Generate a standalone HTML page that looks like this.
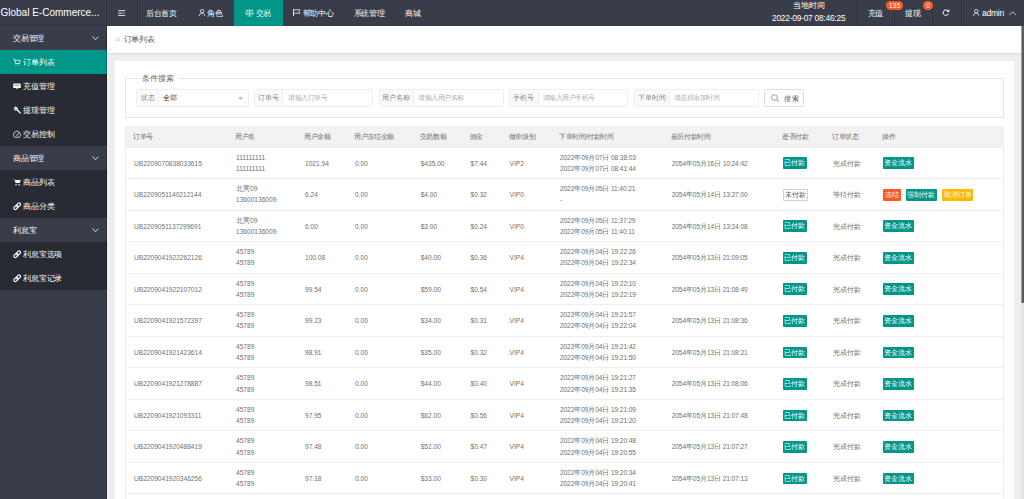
<!DOCTYPE html>
<html><head><meta charset="utf-8">
<style>
*{margin:0;padding:0;box-sizing:border-box}
html,body{width:1024px;height:499px;overflow:hidden;background:#eeeeee;font-family:"Liberation Sans",sans-serif;color:#666}
.abs{position:absolute}
#hdr{position:absolute;left:0;top:0;width:1024px;height:25.6px;background:#393D49;color:#fff}
#logo{position:absolute;left:0;top:0;width:106.7px;height:25.6px;line-height:25.6px;font-size:10px;color:#fff;white-space:nowrap;overflow:hidden;padding-left:0.5px}
.vd{position:absolute;top:0;width:1px;height:25.6px;background:#2f333d}
.nt{position:absolute;top:0.7px;height:25.6px;line-height:25.6px;font-size:7.5px;letter-spacing:-.25px;color:#fff;white-space:nowrap}
#act{position:absolute;left:234px;top:0;width:49px;height:25.6px;background:#009688}
.badge{position:absolute;top:1.2px;height:8.8px;line-height:9.6px;border-radius:4.4px;background:#FF5722;color:#fff;font-size:7px;text-align:center}
#side{position:absolute;left:0;top:25.6px;width:106.7px;height:474px;background:#393D49}
.sg,.ss,.sa{position:absolute;left:0;width:106.7px;height:24px;line-height:24px;font-size:7.5px;letter-spacing:-.25px;color:#fff;white-space:nowrap}
.sg{background:#393D49}
.ss{background:#282B33}
.sa{background:#009688}
.sg .st{position:absolute;left:13.2px;top:1.6px}
.chev{position:absolute;left:91.6px;top:10.6px}
.si{position:absolute;left:13.2px;top:8.9px}
.sst{position:absolute;left:23.3px;top:1.4px}
#bc{position:absolute;left:106.7px;top:25.6px;width:915.3px;height:27px;background:#fff;box-shadow:0 1px 2px rgba(0,0,0,.08)}
#bc .t{position:absolute;left:17px;top:0.3px;line-height:27px;font-size:7.5px;letter-spacing:-.25px;color:#555}
#scroll{position:absolute;left:1021px;top:25.6px;width:3px;height:474px;background:#e3e3e3}
#thumb{position:absolute;left:1021px;top:25.6px;width:3px;height:277px;background:linear-gradient(to right,#a0a0a0 0,#a0a0a0 33%,#5c5c5c 33%)}
#card{position:absolute;left:114.7px;top:61px;width:899.5px;height:450px;background:#fff}
#fs{position:absolute;left:125.3px;top:78.4px;width:878.5px;height:40px;border:1px solid #e6e6e6}
#legend{position:absolute;left:138px;top:73px;height:11px;line-height:11px;padding:0 4px;background:#fff;font-size:7.5px;color:#666}
.ig{position:absolute;top:89.4px;height:17.2px;border:1px solid #eee;border-radius:1.5px;background:#fff}
.ig .lb{position:absolute;left:0;top:0;height:15.2px;line-height:16.6px;background:#fafafa;border-right:1px solid #eee;font-size:6.9px;color:#888;text-align:center}
.ig .ph{position:absolute;top:0;line-height:16.6px;font-size:6.6px;letter-spacing:-.5px;color:#b0b0b0;white-space:nowrap}
#sbtn{position:absolute;left:764.3px;top:89.4px;width:39.5px;height:17.3px;border:1px solid #ddd;border-radius:1.5px;background:#fff}
#tbl{position:absolute;left:125.3px;top:126px;width:878.7px;height:400px;border-left:1px solid #eeeeee;border-right:1px solid #eeeeee}
.thead{position:absolute;left:0;top:0;width:100%;height:21.5px;background:#f2f2f2;border-bottom:1px solid #ececec}
.row{position:absolute;left:0;width:100%;height:31.52px;border-bottom:1px solid #efefef;background:#fff}
.c,.c2,.cb{position:absolute;top:0;height:100%;white-space:nowrap;font-size:6.6px;color:#707070}
.thead .c{line-height:22.8px;letter-spacing:-.4px;margin-left:-.8px}
.dt{letter-spacing:-.1px}
.row .c{line-height:31px}
.c2 .l1{position:absolute;left:0;top:5.3px;line-height:10.67px}
.c2 .l2{position:absolute;left:0;top:16.4px;line-height:10.67px}
.cb{top:9.9px;height:11.7px;margin-left:-0.4px}
.btn{display:inline-block;height:11.6px;line-height:11.6px;padding:0;text-align:center;font-size:6.6px;color:#fff;border-radius:1px;margin-right:5.1px;vertical-align:top}
.btn.g{background:#009688}
.btn.r{background:#FF5722}
.btn.y{background:#FFB800}
.btn.o{background:#fff;color:#555;border:1px solid #d2d2d2;line-height:9.6px}
</style></head><body>
<div id="hdr">
 <div id="logo">Global E-Commerce...</div>
 <div class="vd" style="left:106.2px"></div>
 <div class="vd" style="left:136.5px"></div>
 <svg class="abs" style="left:118px;top:9.8px" width="8" height="6.4" viewBox="0 0 16 13"><rect x="0" y="0.3" width="14.5" height="2" fill="#ddd"/><rect x="0" y="5.3" width="9" height="2" fill="#ddd"/><path d="M11 4.3l3 2-3 2z" fill="#ddd"/><rect x="0" y="10.3" width="14.5" height="2" fill="#ddd"/></svg>
 <div class="nt" style="left:145.9px">后台首页</div>
 <svg class="abs" style="left:198.8px;top:9.2px" width="6.2" height="7.2" viewBox="0 0 12.4 14.4"><circle cx="6.2" cy="4.3" r="3.4" fill="none" stroke="#fff" stroke-width="1.5"/><path d="M0.8 14.4c0-3.8 2.3-6.2 5.4-6.2s5.4 2.4 5.4 6.2" fill="none" stroke="#fff" stroke-width="1.5"/></svg>
 <div class="nt" style="left:207.3px">角色</div>
 <div id="act"></div>
 <svg class="abs" style="left:245px;top:9.2px" width="9" height="7.5" viewBox="0 0 18 15"><path d="M9 1.2v12.6M5 14h8M1.5 2.6h15" stroke="#fff" stroke-width="1.3" fill="none"/><path d="M4 2.6L1.2 8.2M4 2.6L6.8 8.2M14 2.6L11.2 8.2M14 2.6L16.8 8.2" stroke="#fff" stroke-width="0.8" fill="none"/><path d="M0.6 8.2h6.8a3.4 2.8 0 0 1-6.8 0zM10.6 8.2h6.8a3.4 2.8 0 0 1-6.8 0z" fill="none" stroke="#fff" stroke-width="1.1"/></svg>
 <div class="nt" style="left:255.7px">交易</div>
 <svg class="abs" style="left:293px;top:9.2px" width="8" height="7" viewBox="0 0 16 14"><path d="M1 0.5v13.5" stroke="#fff" stroke-width="1.7"/><path d="M1 1.5h13l-2.5 3.5 2.5 3.5H1" fill="none" stroke="#fff" stroke-width="1.4"/></svg>
 <div class="nt" style="left:302.7px">帮助中心</div>
 <div class="nt" style="left:353.5px">系统管理</div>
 <div class="nt" style="left:404.8px">商城</div>
 <div class="nt" style="left:793.3px;top:-6.8px;font-size:7.5px">当地时间</div>
 <div class="nt" style="left:771.6px;top:6px;font-size:9px;transform:scaleX(.93);transform-origin:0 0">2022-09-07 08:46:25</div>
 <div class="vd" style="left:856.4px"></div>
 <div class="vd" style="left:894.3px"></div>
 <div class="vd" style="left:931.7px"></div>
 <div class="vd" style="left:961.3px"></div>
 <div class="nt" style="left:867.6px">充值</div>
 <div class="badge" style="left:885.7px;width:17.6px">135</div>
 <div class="nt" style="left:905px">提现</div>
 <div class="badge" style="left:923.2px;width:10.2px">0</div>
 <svg class="abs" style="left:942.4px;top:8.8px" width="7.5" height="7" viewBox="0 0 15 14"><path d="M12.5 4.5A5.5 5.5 0 1 0 13 9" fill="none" stroke="#fff" stroke-width="2"/><path d="M14.5 0.5v5.5h-5.5z" fill="#fff"/></svg>
 <svg class="abs" style="left:972.7px;top:8.8px" width="6.5" height="7.4" viewBox="0 0 13 15"><circle cx="6.5" cy="4.5" r="3.6" fill="none" stroke="#fff" stroke-width="1.5"/><path d="M0.8 15c0-4 2.5-6.5 5.7-6.5s5.7 2.5 5.7 6.5" fill="none" stroke="#fff" stroke-width="1.5"/></svg>
 <div class="nt" style="left:982px;font-size:8.5px">admin</div>
 <svg class="abs" style="left:1008.8px;top:10.6px" width="7.4" height="4.4" viewBox="0 0 15 9"><path d="M1 8l6.5-6.5 6.5 6.5" fill="none" stroke="#fff" stroke-width="1.5"/></svg>
</div>
<div id="side">
<div class="sg" style="top:0.00px"><span class="st">交易管理</span><svg class="chev" viewBox="0 0 10 6" width="7" height="4.5"><path d="M0.5 0.5l4.5 4.5 4.5-4.5" fill="none" stroke="#fff" stroke-width="1.2"/></svg></div>
<div class="sa" style="top:24.00px"><svg class="si" viewBox="0 0 16 16" width="8" height="8"><path d="M0.5 2h2.5l2 9h8l1.5-6.5H4" fill="none" stroke="#fff" stroke-width="1.5"/><circle cx="6" cy="14" r="1.2" fill="#fff"/><circle cx="12" cy="14" r="1.2" fill="#fff"/></svg><span class="sst">订单列表</span></div>
<div class="ss" style="top:48.00px"><svg class="si" viewBox="0 0 16 16" width="8" height="8"><rect x="0.5" y="3" width="15" height="9" rx="1" fill="#fff"/><path d="M3 6.5h10" stroke="#282B33" stroke-width="1.2"/><path d="M6 12l2 2.5 2-2.5z" fill="#fff"/></svg><span class="sst">充值管理</span></div>
<div class="ss" style="top:72.00px"><svg class="si" viewBox="0 0 16 16" width="8" height="8"><path d="M5.5 0.5l5 5-3.5 3.5-5-5z" fill="#fff"/><path d="M1 5.5l4.5 4.5" stroke="#fff" stroke-width="1.6"/><path d="M8 7.5l7 7" stroke="#fff" stroke-width="2.6"/></svg><span class="sst">提现管理</span></div>
<div class="ss" style="top:96.00px"><svg class="si" viewBox="0 0 16 16" width="8" height="8"><path d="M3 14.5A7 7 0 1 1 13 14.5z" fill="none" stroke="#fff" stroke-width="1.5"/><path d="M7 11.5l5-6" stroke="#fff" stroke-width="1.6"/></svg><span class="sst">交易控制</span></div>
<div class="sg" style="top:120.00px"><span class="st">商品管理</span><svg class="chev" viewBox="0 0 10 6" width="7" height="4.5"><path d="M0.5 0.5l4.5 4.5 4.5-4.5" fill="none" stroke="#fff" stroke-width="1.2"/></svg></div>
<div class="ss" style="top:144.00px"><svg class="si" viewBox="0 0 16 16" width="8" height="8"><path d="M0 2h3l2 8h8.5l2-6H4z" fill="#fff"/><circle cx="6" cy="13.5" r="1.5" fill="#fff"/><circle cx="12" cy="13.5" r="1.5" fill="#fff"/></svg><span class="sst">商品列表</span></div>
<div class="ss" style="top:168.00px"><svg class="si" viewBox="0 0 16 16" width="8.4" height="8.4" style="margin-top:-.3px"><g transform="rotate(-45 8 8)"><rect x="0.2" y="5.3" width="9" height="5.4" rx="2.7" fill="none" stroke="#fff" stroke-width="2.1"/><rect x="6.8" y="5.3" width="9" height="5.4" rx="2.7" fill="none" stroke="#fff" stroke-width="2.1"/></g></svg><span class="sst">商品分类</span></div>
<div class="sg" style="top:192.00px"><span class="st">利息宝</span><svg class="chev" viewBox="0 0 10 6" width="7" height="4.5"><path d="M0.5 0.5l4.5 4.5 4.5-4.5" fill="none" stroke="#fff" stroke-width="1.2"/></svg></div>
<div class="ss" style="top:216.00px"><svg class="si" viewBox="0 0 16 16" width="8.4" height="8.4" style="margin-top:-.3px"><g transform="rotate(-45 8 8)"><rect x="0.2" y="5.3" width="9" height="5.4" rx="2.7" fill="none" stroke="#fff" stroke-width="2.1"/><rect x="6.8" y="5.3" width="9" height="5.4" rx="2.7" fill="none" stroke="#fff" stroke-width="2.1"/></g></svg><span class="sst">利息宝选项</span></div>
<div class="ss" style="top:240.00px"><svg class="si" viewBox="0 0 16 16" width="8.4" height="8.4" style="margin-top:-.3px"><g transform="rotate(-45 8 8)"><rect x="0.2" y="5.3" width="9" height="5.4" rx="2.7" fill="none" stroke="#fff" stroke-width="2.1"/><rect x="6.8" y="5.3" width="9" height="5.4" rx="2.7" fill="none" stroke="#fff" stroke-width="2.1"/></g></svg><span class="sst">利息宝记录</span></div>
</div>
<div class="abs" style="left:0;top:25px;width:107px;height:1px;background:#30343d"></div>
<div class="abs" style="left:106px;top:26px;width:1px;height:473px;background:rgba(0,0,0,.22)"></div>
<div id="bc">
 <svg class="abs" style="left:8.1px;top:11.6px" width="5.6" height="5.2" viewBox="0 0 11 10"><path d="M1 1l4 4-4 4M6 1l4 4-4 4" fill="none" stroke="#888" stroke-width="1"/></svg>
 <div class="t">订单列表</div>
</div>
<div id="card"></div>
<div id="fs"></div>
<div id="legend">条件搜索</div>
<div class="ig" style="left:136.3px;width:112.4px"><div class="lb" style="width:21.8px">状态</div><div class="ph" style="left:26.2px;color:#333;font-size:6.9px;letter-spacing:-.3px">全部</div><svg class="abs" style="left:100.4px;top:6.4px" width="5.4" height="3.2" viewBox="0 0 10 6"><path d="M0 0h10L5 6z" fill="#c2c2c2"/></svg></div>
<div class="ig" style="left:254.2px;width:119.3px"><div class="lb" style="width:28.3px">订单号</div><div class="ph" style="left:33px">请输入订单号</div></div>
<div class="ig" style="left:378.6px;width:125px"><div class="lb" style="width:34.8px">用户名称</div><div class="ph" style="left:38.6px">请输入用户名称</div></div>
<div class="ig" style="left:509.4px;width:118.6px"><div class="lb" style="width:28.2px">手机号</div><div class="ph" style="left:32.5px">请输入用户手机号</div></div>
<div class="ig" style="left:633.8px;width:125px"><div class="lb" style="width:35px">下单时间</div><div class="ph" style="left:38.8px">请选择添加时间</div></div>
<div id="sbtn"><svg class="abs" style="left:5.6px;top:3.6px" width="8.4" height="8.6" viewBox="0 0 17 17"><circle cx="7" cy="7" r="5.8" fill="none" stroke="#666" stroke-width="1.3"/><path d="M11.5 11.5l4 4" stroke="#666" stroke-width="1.8"/></svg><div class="abs" style="left:18.6px;top:0.6px;line-height:15.3px;font-size:6.9px;color:#555;letter-spacing:1.2px;white-space:nowrap">搜索</div></div>
<div id="tbl">
<div class="thead"><div class="c" style="left:7.70px">订单号</div><div class="c" style="left:109.70px">用户名</div><div class="c" style="left:178.70px">用户余额</div><div class="c" style="left:228.70px">用户冻结金额</div><div class="c" style="left:294.40px">交易数额</div><div class="c" style="left:344.20px">佣金</div><div class="c" style="left:383.30px">做单级别</div><div class="c" style="left:433.70px">下单时间/付款时间</div><div class="c" style="left:545.40px">最后付款时间</div><div class="c" style="left:656.70px">是否付款</div><div class="c" style="left:706.50px">订单状态</div><div class="c" style="left:756.70px">操作</div></div>
<div class="row" style="top:21.50px"><div class="c" style="left:7.70px">UB2209070838033615</div><div class="c2" style="left:109.70px"><div class="l1">111111111</div><div class="l2">111111111</div></div><div class="c" style="left:178.70px">1021.94</div><div class="c" style="left:228.70px">0.00</div><div class="c" style="left:294.40px">$435.00</div><div class="c" style="left:344.20px">$7.44</div><div class="c" style="left:383.30px">VIP2</div><div class="c2 dt" style="left:433.70px"><div class="l1">2022年09月07日 08:38:03</div><div class="l2">2022年09月07日 08:41:44</div></div><div class="c dt" style="left:545.40px">2054年05月16日 10:24:42</div><div class="cb" style="left:656.70px"><span class="btn g" style="width:24.6px">已付款</span></div><div class="c" style="left:706.50px">完成付款</div><div class="cb" style="left:756.70px"><span class="btn g" style="width:31.2px">资金流水</span></div></div>
<div class="row" style="top:53.02px"><div class="c" style="left:7.70px">UB2209051140212144</div><div class="c2" style="left:109.70px"><div class="l1">北冥09</div><div class="l2">13600136009</div></div><div class="c" style="left:178.70px">6.24</div><div class="c" style="left:228.70px">0.00</div><div class="c" style="left:294.40px">$4.00</div><div class="c" style="left:344.20px">$0.32</div><div class="c" style="left:383.30px">VIP0</div><div class="c2 dt" style="left:433.70px"><div class="l1">2022年09月05日 11:40:21</div><div class="l2">-</div></div><div class="c dt" style="left:545.40px">2054年05月14日 13:27:00</div><div class="cb" style="left:656.70px"><span class="btn o" style="width:25.8px">未付款</span></div><div class="c" style="left:706.50px">等待付款</div><div class="cb" style="left:756.70px"><span class="btn r" style="width:18.1px">冻结</span><span class="btn g" style="width:31.2px">强制付款</span><span class="btn y" style="width:30.9px">取消订单</span></div></div>
<div class="row" style="top:84.54px"><div class="c" style="left:7.70px">UB2209051137299691</div><div class="c2" style="left:109.70px"><div class="l1">北冥09</div><div class="l2">13600136009</div></div><div class="c" style="left:178.70px">6.00</div><div class="c" style="left:228.70px">0.00</div><div class="c" style="left:294.40px">$3.00</div><div class="c" style="left:344.20px">$0.24</div><div class="c" style="left:383.30px">VIP0</div><div class="c2 dt" style="left:433.70px"><div class="l1">2022年09月05日 11:37:29</div><div class="l2">2022年09月05日 11:40:11</div></div><div class="c dt" style="left:545.40px">2054年05月14日 13:24:08</div><div class="cb" style="left:656.70px"><span class="btn g" style="width:24.6px">已付款</span></div><div class="c" style="left:706.50px">完成付款</div><div class="cb" style="left:756.70px"><span class="btn g" style="width:31.2px">资金流水</span></div></div>
<div class="row" style="top:116.06px"><div class="c" style="left:7.70px">UB2209041922262126</div><div class="c2" style="left:109.70px"><div class="l1">45789</div><div class="l2">45789</div></div><div class="c" style="left:178.70px">100.08</div><div class="c" style="left:228.70px">0.00</div><div class="c" style="left:294.40px">$40.00</div><div class="c" style="left:344.20px">$0.36</div><div class="c" style="left:383.30px">VIP4</div><div class="c2 dt" style="left:433.70px"><div class="l1">2022年09月04日 19:22:26</div><div class="l2">2022年09月04日 19:22:34</div></div><div class="c dt" style="left:545.40px">2054年05月13日 21:09:05</div><div class="cb" style="left:656.70px"><span class="btn g" style="width:24.6px">已付款</span></div><div class="c" style="left:706.50px">完成付款</div><div class="cb" style="left:756.70px"><span class="btn g" style="width:31.2px">资金流水</span></div></div>
<div class="row" style="top:147.58px"><div class="c" style="left:7.70px">UB2209041922107012</div><div class="c2" style="left:109.70px"><div class="l1">45789</div><div class="l2">45789</div></div><div class="c" style="left:178.70px">99.54</div><div class="c" style="left:228.70px">0.00</div><div class="c" style="left:294.40px">$59.00</div><div class="c" style="left:344.20px">$0.54</div><div class="c" style="left:383.30px">VIP4</div><div class="c2 dt" style="left:433.70px"><div class="l1">2022年09月04日 19:22:10</div><div class="l2">2022年09月04日 19:22:19</div></div><div class="c dt" style="left:545.40px">2054年05月13日 21:08:49</div><div class="cb" style="left:656.70px"><span class="btn g" style="width:24.6px">已付款</span></div><div class="c" style="left:706.50px">完成付款</div><div class="cb" style="left:756.70px"><span class="btn g" style="width:31.2px">资金流水</span></div></div>
<div class="row" style="top:179.10px"><div class="c" style="left:7.70px">UB2209041921572397</div><div class="c2" style="left:109.70px"><div class="l1">45789</div><div class="l2">45789</div></div><div class="c" style="left:178.70px">99.23</div><div class="c" style="left:228.70px">0.00</div><div class="c" style="left:294.40px">$34.00</div><div class="c" style="left:344.20px">$0.31</div><div class="c" style="left:383.30px">VIP4</div><div class="c2 dt" style="left:433.70px"><div class="l1">2022年09月04日 19:21:57</div><div class="l2">2022年09月04日 19:22:04</div></div><div class="c dt" style="left:545.40px">2054年05月13日 21:08:36</div><div class="cb" style="left:656.70px"><span class="btn g" style="width:24.6px">已付款</span></div><div class="c" style="left:706.50px">完成付款</div><div class="cb" style="left:756.70px"><span class="btn g" style="width:31.2px">资金流水</span></div></div>
<div class="row" style="top:210.62px"><div class="c" style="left:7.70px">UB2209041921423614</div><div class="c2" style="left:109.70px"><div class="l1">45789</div><div class="l2">45789</div></div><div class="c" style="left:178.70px">98.91</div><div class="c" style="left:228.70px">0.00</div><div class="c" style="left:294.40px">$35.00</div><div class="c" style="left:344.20px">$0.32</div><div class="c" style="left:383.30px">VIP4</div><div class="c2 dt" style="left:433.70px"><div class="l1">2022年09月04日 19:21:42</div><div class="l2">2022年09月04日 19:21:50</div></div><div class="c dt" style="left:545.40px">2054年05月13日 21:08:21</div><div class="cb" style="left:656.70px"><span class="btn g" style="width:24.6px">已付款</span></div><div class="c" style="left:706.50px">完成付款</div><div class="cb" style="left:756.70px"><span class="btn g" style="width:31.2px">资金流水</span></div></div>
<div class="row" style="top:242.14px"><div class="c" style="left:7.70px">UB2209041921278887</div><div class="c2" style="left:109.70px"><div class="l1">45789</div><div class="l2">45789</div></div><div class="c" style="left:178.70px">98.51</div><div class="c" style="left:228.70px">0.00</div><div class="c" style="left:294.40px">$44.00</div><div class="c" style="left:344.20px">$0.40</div><div class="c" style="left:383.30px">VIP4</div><div class="c2 dt" style="left:433.70px"><div class="l1">2022年09月04日 19:21:27</div><div class="l2">2022年09月04日 19:21:35</div></div><div class="c dt" style="left:545.40px">2054年05月13日 21:08:06</div><div class="cb" style="left:656.70px"><span class="btn g" style="width:24.6px">已付款</span></div><div class="c" style="left:706.50px">完成付款</div><div class="cb" style="left:756.70px"><span class="btn g" style="width:31.2px">资金流水</span></div></div>
<div class="row" style="top:273.66px"><div class="c" style="left:7.70px">UB2209041921093311</div><div class="c2" style="left:109.70px"><div class="l1">45789</div><div class="l2">45789</div></div><div class="c" style="left:178.70px">97.95</div><div class="c" style="left:228.70px">0.00</div><div class="c" style="left:294.40px">$62.00</div><div class="c" style="left:344.20px">$0.56</div><div class="c" style="left:383.30px">VIP4</div><div class="c2 dt" style="left:433.70px"><div class="l1">2022年09月04日 19:21:09</div><div class="l2">2022年09月04日 19:21:20</div></div><div class="c dt" style="left:545.40px">2054年05月13日 21:07:48</div><div class="cb" style="left:656.70px"><span class="btn g" style="width:24.6px">已付款</span></div><div class="c" style="left:706.50px">完成付款</div><div class="cb" style="left:756.70px"><span class="btn g" style="width:31.2px">资金流水</span></div></div>
<div class="row" style="top:305.18px"><div class="c" style="left:7.70px">UB2209041920488419</div><div class="c2" style="left:109.70px"><div class="l1">45789</div><div class="l2">45789</div></div><div class="c" style="left:178.70px">97.48</div><div class="c" style="left:228.70px">0.00</div><div class="c" style="left:294.40px">$52.00</div><div class="c" style="left:344.20px">$0.47</div><div class="c" style="left:383.30px">VIP4</div><div class="c2 dt" style="left:433.70px"><div class="l1">2022年09月04日 19:20:48</div><div class="l2">2022年09月04日 19:20:55</div></div><div class="c dt" style="left:545.40px">2054年05月13日 21:07:27</div><div class="cb" style="left:656.70px"><span class="btn g" style="width:24.6px">已付款</span></div><div class="c" style="left:706.50px">完成付款</div><div class="cb" style="left:756.70px"><span class="btn g" style="width:31.2px">资金流水</span></div></div>
<div class="row" style="top:336.70px"><div class="c" style="left:7.70px">UB2209041920346256</div><div class="c2" style="left:109.70px"><div class="l1">45789</div><div class="l2">45789</div></div><div class="c" style="left:178.70px">97.18</div><div class="c" style="left:228.70px">0.00</div><div class="c" style="left:294.40px">$33.00</div><div class="c" style="left:344.20px">$0.30</div><div class="c" style="left:383.30px">VIP4</div><div class="c2 dt" style="left:433.70px"><div class="l1">2022年09月04日 19:20:34</div><div class="l2">2022年09月04日 19:20:41</div></div><div class="c dt" style="left:545.40px">2054年05月13日 21:07:13</div><div class="cb" style="left:656.70px"><span class="btn g" style="width:24.6px">已付款</span></div><div class="c" style="left:706.50px">完成付款</div><div class="cb" style="left:756.70px"><span class="btn g" style="width:31.2px">资金流水</span></div></div>
</div>
<div id="scroll"></div><div id="thumb"></div>
</body></html>
